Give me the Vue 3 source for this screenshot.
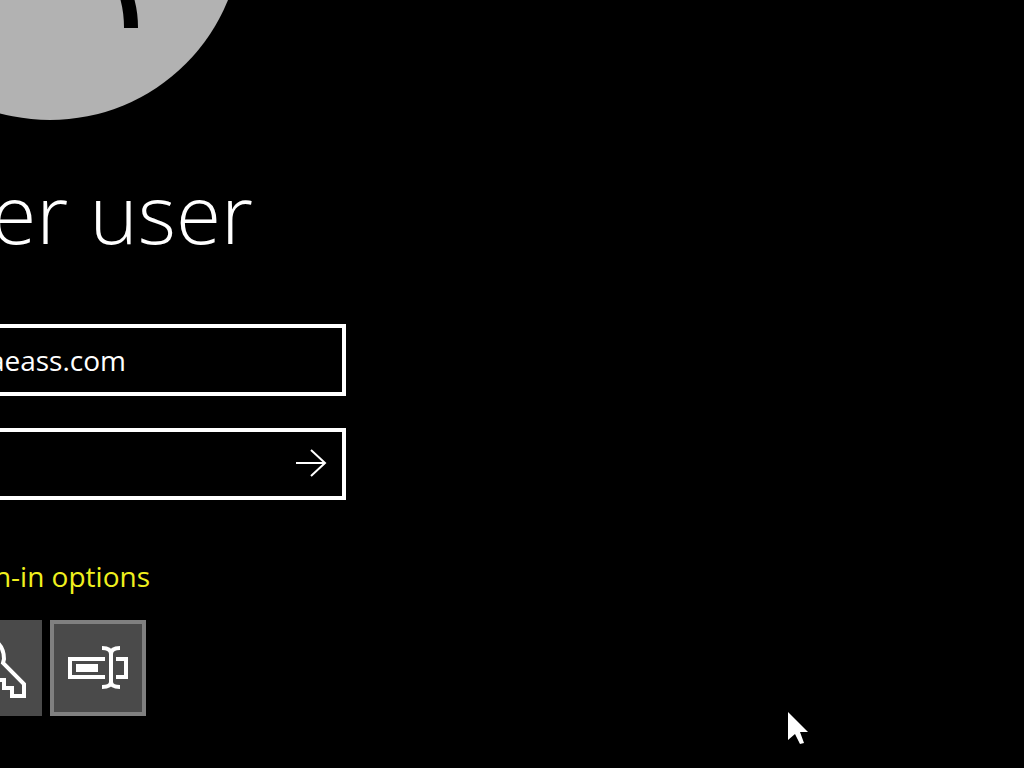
<script setup>
import { ref } from 'vue'

const account = ref('aeass.com')
const password = ref('')
const method = ref('password')
</script>

<template>
  <main class="screen">
    <form class="sign-in" @submit.prevent>
      <svg class="avatar" viewBox="0 0 346 120" aria-hidden="true">
        <circle cx="50" cy="-72" r="192" fill="#b2b2b2" />
        <path d="M120-2Q124 12 124 28H138Q138 12 134-2Z" fill="#000" />
      </svg>

      <h1 class="title">er user</h1>

      <input v-model="account" class="field account" type="text" aria-label="Account" />

      <div class="field password">
        <input v-model="password" class="secret" type="password" aria-label="Password" />
        <button class="submit" type="submit" aria-label="Submit">
          <svg viewBox="0 0 32 32" fill="none" stroke="#fff" stroke-width="2">
            <path d="M0 15H29M15 2L29 15L15 28" />
          </svg>
        </button>
      </div>

      <a class="options" href="#">n-in options</a>

      <div class="methods">
        <button class="method key" type="button" aria-label="Security key" @click="method = 'key'">
          <svg viewBox="0 0 42 96" fill="none" stroke="#fff" stroke-width="4">
            <path d="M-2 23Q4 29 4 39L3 43L24 64V76H12V68H4V60H-2" />
          </svg>
        </button>
        <button class="method selected" type="button" aria-label="Password" @click="method = 'password'">
          <svg viewBox="0 0 88 88" fill="none" stroke="#fff">
            <path d="M51 35H16V53H51M62 35H72V53H62" stroke-width="4" />
            <path d="M22 40H44V48H22Z" fill="#fff" stroke="none" />
            <path d="M48 24C53 24 57 25 57 30V58C57 62 53 63 48 63M66 24C61 24 57 25 57 30M57 58C57 62 61 63 66 63" stroke-width="4" />
          </svg>
        </button>
      </div>
    </form>

    <svg class="pointer" viewBox="0 0 20 32" aria-hidden="true">
      <path d="M0 0V28L7 22L12 32L16 31L12 20H20Z" fill="#fff" />
    </svg>
  </main>
</template>

<style>
body {
  background: #000;
}
</style>

<style scoped>
.screen {
  position: relative;
  min-height: 100vh;
  overflow: hidden;
  background: #000;
  color: #fff;
  font-family: "Open Sans", "Noto Sans", sans-serif;
  font-size: 28px;
}

.sign-in {
  display: flex;
  flex-direction: column;
  max-width: 346px;
}

.avatar {
  display: block;
  width: 100%;
}

.title {
  display: flex;
  justify-content: flex-end;
  margin: 32px 0 52px;
  padding-right: 93px;
  font-size: 82px;
  font-weight: 300;
  line-height: 120px;
  white-space: nowrap;
}

.field {
  box-sizing: border-box;
  height: 72px;
  margin-left: -20px;
  border: 4px solid #fff;
  background: #000;
  color: #fff;
  font: inherit;
}

.account {
  padding: 0 216px 0 0;
  text-align: right;
  outline: none;
}

.password {
  display: flex;
  margin-top: 32px;
}

.secret {
  flex: 1;
  min-width: 0;
  border: 0;
  padding: 0 8px;
  outline: none;
  background: transparent;
  color: #fff;
  font: inherit;
}

.submit {
  display: flex;
  align-items: center;
  justify-content: center;
  width: 60px;
  padding: 0;
  border: 0;
  background: transparent;
}

.submit svg {
  width: 32px;
  height: 32px;
}

.options {
  align-self: flex-start;
  display: flex;
  justify-content: flex-end;
  width: 150px;
  margin-top: 54px;
  color: #f0f01e;
  line-height: 44px;
  text-decoration: none;
  white-space: nowrap;
}

.methods {
  display: flex;
  gap: 8px;
  margin-top: 22px;
}

.method {
  box-sizing: border-box;
  width: 96px;
  height: 96px;
  padding: 0;
  border: 0;
  background: #4a4a4a;
}

.method svg {
  display: block;
  width: 100%;
  height: 100%;
}

.key {
  width: 42px;
}

.selected {
  border: 4px solid #808080;
}

.pointer {
  position: absolute;
  left: 788px;
  top: 712px;
  width: 20px;
  height: 32px;
}
</style>
